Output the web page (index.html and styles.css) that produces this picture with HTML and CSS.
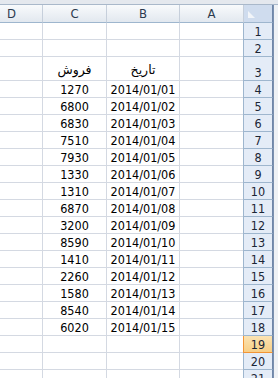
FILE: index.html
```html
<!DOCTYPE html>
<html>
<head>
<meta charset="utf-8">
<link rel="stylesheet" href="styles.css">
</head>
<body>
<div class="top"></div>
<div class="frame">
  <div class="sheet">
    <div class="ch cD">D</div>
    <div class="ch">C</div>
    <div class="ch">B</div>
    <div class="ch">A</div>
    <div class="corner"><svg width="28" height="17" viewBox="0 0 28 17"><polygon points="4,6 4,13 11,13" fill="#f2f5f9"/></svg></div>

    <div class="c"></div><div class="c"></div><div class="c"></div><div class="c"></div><div class="rh">1</div>
    <div class="c"></div><div class="c"></div><div class="c"></div><div class="c"></div><div class="rh">2</div>
    <div class="c"></div><div class="c ar">فروش</div><div class="c ar">تاریخ</div><div class="c"></div><div class="rh">3</div>

    <div class="c"></div><div class="c">1270</div><div class="c">2014/01/01</div><div class="c"></div><div class="rh">4</div>
    <div class="c"></div><div class="c">6800</div><div class="c">2014/01/02</div><div class="c"></div><div class="rh">5</div>
    <div class="c"></div><div class="c">6830</div><div class="c">2014/01/03</div><div class="c"></div><div class="rh">6</div>
    <div class="c"></div><div class="c">7510</div><div class="c">2014/01/04</div><div class="c"></div><div class="rh">7</div>
    <div class="c"></div><div class="c">7930</div><div class="c">2014/01/05</div><div class="c"></div><div class="rh">8</div>
    <div class="c"></div><div class="c">1330</div><div class="c">2014/01/06</div><div class="c"></div><div class="rh">9</div>
    <div class="c"></div><div class="c">1310</div><div class="c">2014/01/07</div><div class="c"></div><div class="rh">10</div>
    <div class="c"></div><div class="c">6870</div><div class="c">2014/01/08</div><div class="c"></div><div class="rh">11</div>
    <div class="c"></div><div class="c">3200</div><div class="c">2014/01/09</div><div class="c"></div><div class="rh">12</div>
    <div class="c"></div><div class="c">8590</div><div class="c">2014/01/10</div><div class="c"></div><div class="rh">13</div>
    <div class="c"></div><div class="c">1410</div><div class="c">2014/01/11</div><div class="c"></div><div class="rh">14</div>
    <div class="c"></div><div class="c">2260</div><div class="c">2014/01/12</div><div class="c"></div><div class="rh">15</div>
    <div class="c"></div><div class="c">1580</div><div class="c">2014/01/13</div><div class="c"></div><div class="rh">16</div>
    <div class="c"></div><div class="c">8540</div><div class="c">2014/01/14</div><div class="c"></div><div class="rh">17</div>
    <div class="c"></div><div class="c">6020</div><div class="c">2014/01/15</div><div class="c"></div><div class="rh">18</div>
    <div class="c"></div><div class="c"></div><div class="c"></div><div class="c"></div><div class="rh sel">19</div>
    <div class="c"></div><div class="c"></div><div class="c"></div><div class="c"></div><div class="rh">20</div>
    <div class="c"></div><div class="c"></div><div class="c"></div><div class="c"></div><div class="rh">21</div>
  </div>
  <div class="edge"></div>
</div>
</body>
</html>
```

FILE: styles.css
```css
html, body {
  margin: 0;
  padding: 0;
  width: 278px;
  height: 378px;
  overflow: hidden;
  background: #ffffff;
  font-family: "DejaVu Sans Condensed", "DejaVu Sans", sans-serif;
}

.top {
  height: 4px;
  background: #e4e8ee;
  border-bottom: 1px solid #a9b8ca;
}

.frame {
  display: flex;
}

.sheet {
  width: 273px;
  display: grid;
  grid-template-columns: 43px 64px 73px 64px 29px;
  grid-template-rows: 18px 17px 17px 24px repeat(18, 17px);
}

.edge {
  width: 5px;
  border-left: 1px solid #7a90b0;
  background: #eef1f5;
  box-sizing: border-box;
}

.ch {
  box-sizing: border-box;
  border-right: 1px solid #c6cfdb;
  border-bottom: 1px solid #9eb6ce;
  background: linear-gradient(#f8fafc, #e2e8ef);
  display: flex;
  align-items: center;
  justify-content: center;
  font-size: 13px;
  color: #2c3a4e;
}

.cD {
  justify-content: flex-start;
  padding-left: 7px;
}

.corner {
  box-sizing: border-box;
  border-bottom: 1px solid #9eb6ce;
  border-right: 1px solid #6f86a8;
  background: #cfdcee;
  display: flex;
  align-items: center;
}

.corner svg {
  display: block;
}

.c {
  box-sizing: border-box;
  border-right: 1px solid #d4d9e2;
  border-bottom: 1px solid #d4d9e2;
  display: flex;
  align-items: flex-end;
  justify-content: center;
  font-size: 12.5px;
  line-height: 15px;
  color: #000;
}

.ar {
  font-family: "DejaVu Sans", sans-serif;
  font-size: 12.5px;
  padding-bottom: 3px;
}

.rh {
  box-sizing: border-box;
  border-bottom: 1px solid #9eb6ce;
  border-right: 1px solid #6f86a8;
  border-left: 1px solid #9eb6ce;
  margin-left: -1px;
  background: #e4ecf7;
  display: flex;
  align-items: flex-end;
  justify-content: center;
  font-size: 12.5px;
  line-height: 15px;
  color: #1b2636;
}

.sel {
  background: linear-gradient(#fbe3b3, #f8cf86);
  border-left-color: #f29536;
  border-bottom-color: #f29536;
}
```
